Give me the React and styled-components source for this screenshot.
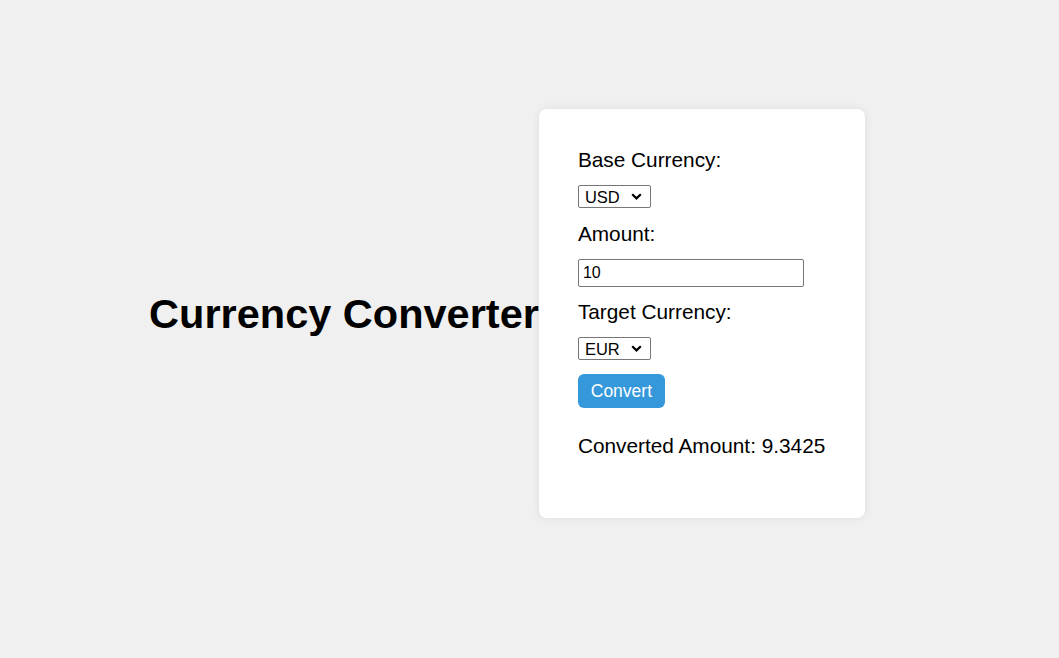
import React, { useState } from "react";
import styled, { createGlobalStyle } from "styled-components";

const GlobalStyle = createGlobalStyle`
  html, body {
    margin: 0;
    padding: 0;
    background: #f0f0f0;
    font-family: "Liberation Sans", Arial, sans-serif;
  }
`;

const chevron =
  "data:image/svg+xml;utf8," +
  encodeURIComponent(
    '<svg xmlns="http://www.w3.org/2000/svg" width="11" height="7" viewBox="0 0 11 7"><path d="M1.2 1.2 L5.5 5.4 L9.8 1.2" fill="none" stroke="#000" stroke-width="2.2"/></svg>'
  );

const Page = styled.div`
  display: flex;
  align-items: center;
  justify-content: center;
  height: 627px;
  padding-right: 45px;
`;

const Title = styled.h1`
  margin: 0;
  font-size: 41.5px;
  font-weight: bold;
  color: #000;
  white-space: nowrap;
`;

const Card = styled.div`
  display: flex;
  flex-direction: column;
  align-items: flex-start;
  width: 326px;
  box-sizing: border-box;
  padding: 39px 39px 40px;
  background: #fff;
  border-radius: 8px;
  box-shadow: 0 0 10px rgba(0, 0, 0, 0.08);
`;

const Label = styled.label`
  display: block;
  font-size: 20.8px;
  line-height: 23px;
  color: #000;
  margin-bottom: 14px;
`;

const Select = styled.select`
  appearance: none;
  font-family: "Liberation Sans", Arial, sans-serif;
  font-size: 16.5px;
  width: 73px;
  height: 23px;
  box-sizing: border-box;
  padding: 0 0 0 6px;
  margin-bottom: ${({ gap }) => gap}px;
  border: 1px solid #767676;
  border-radius: 2px;
  background: #fff url("${chevron}") no-repeat right 8px center;
  color: #000;
`;

const Input = styled.input`
  font-family: "Liberation Sans", Arial, sans-serif;
  font-size: 16px;
  width: 226px;
  height: 28px;
  box-sizing: border-box;
  padding: 1px 4px;
  border: 1px solid #767676;
  border-radius: 2px;
  margin-bottom: 13px;
`;

const Button = styled.button`
  font-family: "Liberation Sans", Arial, sans-serif;
  font-size: 17.5px;
  color: #fff;
  background: #3498db;
  border: none;
  border-radius: 6px;
  width: 87px;
  height: 34px;
  padding: 0;
  cursor: pointer;
`;

const Result = styled.p`
  margin: 26px 0 21px;
  font-size: 20.8px;
  line-height: 23px;
  color: #000;
`;

const App = () => {
  const [base, setBase] = useState("USD");
  const [amount, setAmount] = useState("10");
  const [target, setTarget] = useState("EUR");

  return (
    <>
      <GlobalStyle />
      <Page>
        <Title>Currency Converter</Title>
        <Card>
          <Label>Base Currency:</Label>
          <Select gap={14} value={base} onChange={e => setBase(e.target.value)}>
            <option>USD</option>
            <option>EUR</option>
            <option>GBP</option>
          </Select>
          <Label>Amount:</Label>
          <Input value={amount} onChange={e => setAmount(e.target.value)} />
          <Label>Target Currency:</Label>
          <Select gap={14} value={target} onChange={e => setTarget(e.target.value)}>
            <option>EUR</option>
            <option>USD</option>
            <option>GBP</option>
          </Select>
          <Button>Convert</Button>
          <Result>Converted Amount: 9.3425</Result>
        </Card>
      </Page>
    </>
  );
};

export default App;
